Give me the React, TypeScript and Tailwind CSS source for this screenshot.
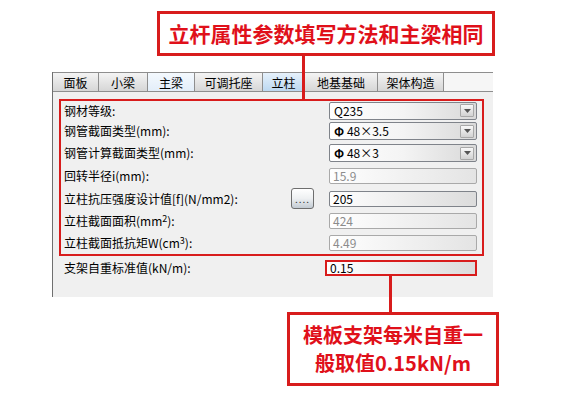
const tabs = [
  { label: '面板', w: 'w-[46px]', kind: 'normal' },
  { label: '小梁', w: 'w-[49px]', kind: 'normal' },
  { label: '主梁', w: 'w-[47px]', kind: 'light' },
  { label: '可调托座', w: 'w-[68px]', kind: 'normal' },
  { label: '立柱', w: 'w-[42px]', kind: 'active' },
  { label: '地基基础', w: 'w-[73px]', kind: 'normal' },
  { label: '架体构造', w: 'w-[66px]', kind: 'normal' },
]

const tabStyles: Record<string, string> = {
  normal: 'bg-gradient-to-b from-[#f4f4f4] to-[#d6d6d6]',
  light: 'bg-gradient-to-b from-[#f4f9fe] to-[#e3eef9]',
  active: 'bg-gradient-to-b from-[#e6f1fb] to-[#bcd8f1]',
}

function Arrow() {
  return (
    <span className="flex h-[13px] w-[14px] items-center justify-center rounded-[1px] border border-[#a8a8a8] bg-gradient-to-b from-[#f8f8f8] to-[#d2d2d2]">
      <svg width="7" height="4" viewBox="0 0 7 4">
        <path d="M0 0h7L3.5 4z" fill="#555" />
      </svg>
    </span>
  )
}

function Select({ children }: { children: React.ReactNode }) {
  return (
    <div className="flex h-[18px] w-[148px] items-center justify-between rounded-[2px] border border-[#7f838a] bg-gradient-to-r from-white via-[#f4f4f4] to-[#d9d9d9] pl-[4px] pr-[2px]">
      <span className="leading-none">{children}</span>
      <Arrow />
    </div>
  )
}

function Field({ value, disabled }: { value: string; disabled?: boolean }) {
  return (
    <div
      className={
        disabled
          ? 'flex h-[16px] w-[148px] items-center rounded-[2px] border border-[#a9a9a9] bg-gradient-to-r from-white to-[#e4e4e4] pl-[3px] text-[#8c8c8c]'
          : 'flex h-[16px] w-[148px] items-center rounded-[2px] border border-[#7f838a] bg-gradient-to-r from-white to-[#dcdcdc] pl-[3px] text-black'
      }
    >
      <span className="leading-none">{value}</span>
    </div>
  )
}

function Row({
  h,
  label,
  button,
  children,
}: {
  h: string
  label: React.ReactNode
  button?: boolean
  children: React.ReactNode
}) {
  return (
    <div className={`flex items-center ${h}`}>
      <div className="w-[227px] whitespace-nowrap leading-none">{label}</div>
      <div className="flex w-[38px] items-center">
        {button && (
          <div className="flex h-[21px] w-[23px] items-center justify-center rounded-[3px] border border-[#6e6e6e] bg-gradient-to-b from-white via-[#eef0f2] to-[#c3cbd3] text-[10px] leading-none tracking-[1px] text-[#333]">
            ....
          </div>
        )}
      </div>
      {children}
    </div>
  )
}

export default function App() {
  return (
    <div className="relative h-[415px] w-[571px] overflow-hidden bg-white font-['Noto_Sans_CJK_SC',sans-serif] text-[12px] text-black">
      {/* dialog panel */}
      <div className="ml-[52px] mt-[72px] h-[225px] w-[441px] border-l border-[#6f6f6f] bg-[#f0f0f0]">
        <div className="flex h-[20px] border-y border-[#8e8e8e] bg-[#f6f6f6]">
          {tabs.map((t) => (
            <div
              key={t.label}
              className={`flex items-center justify-center border-r border-[#8e8e8e] pt-[1px] leading-none ${t.w} ${tabStyles[t.kind]}`}
            >
              {t.label}
            </div>
          ))}
        </div>

        <div className="pl-[6px] pt-[7px]">
          <div className="w-[425px] border-2 border-[#d81c1c] pl-[3px]">
            <Row h="h-[19px]" label="钢材等级:">
              <Select>Q235</Select>
            </Row>
            <Row h="h-[22px]" label="钢管截面类型(mm):">
              <Select>
                <b>Φ</b> 48×3.5
              </Select>
            </Row>
            <Row h="h-[22px]" label="钢管计算截面类型(mm):">
              <Select>
                <b>Φ</b> 48×3
              </Select>
            </Row>
            <Row h="h-[23px]" label="回转半径i(mm):">
              <Field value="15.9" disabled />
            </Row>
            <Row h="h-[23px]" label="立柱抗压强度设计值[f](N/mm2):" button>
              <Field value="205" />
            </Row>
            <Row
              h="h-[22px]"
              label={
                <>
                  立柱截面面积(mm<sup className="text-[9px]">2</sup>):
                </>
              }
            >
              <Field value="424" disabled />
            </Row>
            <Row
              h="h-[22px]"
              label={
                <>
                  立柱截面抵抗矩W(cm<sup className="text-[9px]">3</sup>):
                </>
              }
            >
              <Field value="4.49" disabled />
            </Row>
          </div>

          <div className="mt-[4px] flex h-[16px] items-center pl-[5px]">
            <div className="w-[261px] leading-none">支架自重标准值(kN/m):</div>
            <div className="flex h-[16px] w-[152px] items-center border-2 border-[#d81c1c] bg-gradient-to-r from-white to-[#dcdcdc] pl-[3px] leading-none">
              0.15
            </div>
          </div>
        </div>
      </div>

      {/* annotations */}
      <div className="absolute left-[157px] top-[11px] flex h-[45px] w-[338px] items-center justify-center border-[3px] border-[#d81c1c] bg-white text-[21px] font-bold leading-none text-[#e0101a]">
        立杆属性参数填写方法和主梁相同
      </div>
      <div className="absolute left-[302px] top-[56px] h-[44px] w-[3px] bg-[#d81c1c]" />

      <div className="absolute left-[389px] top-[276px] h-[36px] w-[3px] bg-[#d81c1c]" />
      <div className="absolute left-[287px] top-[312px] flex h-[74px] w-[212px] flex-col items-center justify-center border-[3px] border-[#d81c1c] bg-white text-[20px] font-bold text-[#e0101a]">
        <span className="block h-[28px] leading-[28px]">模板支架每米自重一</span>
        <span className="block h-[28px] leading-[28px]">般取值0.15kN/m</span>
      </div>
    </div>
  )
}
